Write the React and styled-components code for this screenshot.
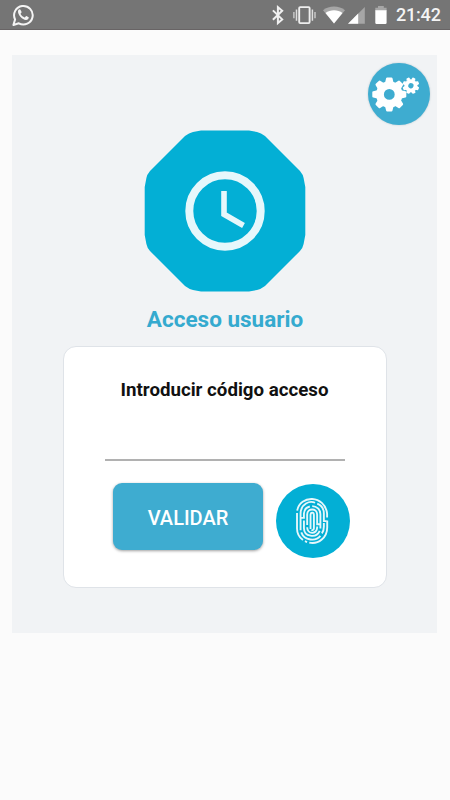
import styled, { createGlobalStyle } from "styled-components";

const GlobalStyle = createGlobalStyle`
  * {
    box-sizing: border-box;
  }

  body {
    margin: 0;
    background-color: #fbfbfb;
    font-family: Roboto, "Liberation Sans", sans-serif;
  }
`;

const Screen = styled.div`
  min-height: 800px;
`;

const StatusBar = styled.header`
  display: flex;
  align-items: center;
  justify-content: space-between;
  height: 30px;
  padding: 0 9px 0 11px;
  background-color: #757575;
  border-bottom: 1px solid #686465;
`;

const StatusIcons = styled.div`
  display: flex;
  align-items: center;
`;

const StatusIcon = styled.svg`
  display: block;
  width: ${(props) => props.$width}px;
  height: 30px;
  margin-right: ${(props) => props.$gap || 0}px;
`;

const Time = styled.span`
  width: 45px;
  padding-top: 1px;
  color: #f4f4f4;
  font-size: 18px;
  font-weight: 500;
  line-height: 30px;
  letter-spacing: -0.2px;
  white-space: nowrap;
`;

const Panel = styled.main`
  display: flex;
  flex-direction: column;
  align-items: center;
  width: 425px;
  height: 578px;
  margin: 25px 0 0 12px;
  padding: 8px 7px 0;
  background-color: #f1f3f5;
`;

const SettingsButton = styled.button`
  align-self: flex-end;
  width: 62px;
  height: 62px;
  padding: 0;
  border: none;
  border-radius: 50%;
  background-color: #3eacd0;
  box-shadow: 0 0 2px rgba(62, 110, 130, 0.35);
`;

const Logo = styled.svg`
  display: block;
  width: 162px;
  height: 162px;
  margin-top: 5px;
`;

const Title = styled.h1`
  margin: 12px 0 0;
  padding-left: 1px;
  color: #35aacf;
  font-size: 22.5px;
  font-weight: 700;
  line-height: 30px;
`;

const Card = styled.form`
  display: flex;
  flex-direction: column;
  align-items: center;
  width: 324px;
  height: 242px;
  margin-top: 12px;
  padding-top: 30px;
  border: 1px solid #dfe3e8;
  border-radius: 13px;
  background-color: #fff;
`;

const Label = styled.label`
  color: #111;
  font-size: 18.7px;
  font-weight: 700;
  line-height: 26px;
`;

const CodeInput = styled.input`
  width: 240px;
  height: 44px;
  margin-top: 14px;
  padding: 0 4px;
  border: none;
  border-bottom: 2px solid #b1b1b1;
  outline: none;
  background: transparent;
  font-size: 18px;
`;

const Actions = styled.div`
  display: flex;
  align-items: flex-start;
  gap: 13px;
  margin-top: 22px;
  margin-left: 13px;
`;

const SubmitButton = styled.button`
  width: 150px;
  height: 67px;
  padding: 2px 0 0 1px;
  border: none;
  border-radius: 9px;
  background-color: #3eacd0;
  box-shadow: 0 1px 3px rgba(0, 0, 0, 0.38);
  color: #fff;
  font-family: inherit;
  font-size: 20px;
  font-weight: 500;
`;

const FingerprintButton = styled.button`
  width: 74px;
  height: 74px;
  margin-top: 0.5px;
  padding: 0;
  border: none;
  border-radius: 50%;
  background-color: #03afd5;
`;

const Drawing = styled.svg`
  display: block;
  width: 100%;
  height: 100%;
`;

const TEETH = [0, 45, 90, 135, 180, 225, 270, 315];

function Gear({ x, y, scale = 1, turn = 0 }) {
  return (
    <g transform={`translate(${x} ${y}) rotate(${turn}) scale(${scale})`}>
      <circle r="9.3" fill="none" stroke="#fff" strokeWidth="7.8" />
      {TEETH.map((angle) => (
        <path
          key={angle}
          d="M-4.2 -12 L-3.2 -16.1 Q-3 -17 -2.1 -17 H2.1 Q3 -17 3.2 -16.1 L4.2 -12Z"
          fill="#fff"
          transform={`rotate(${angle})`}
        />
      ))}
    </g>
  );
}

function WhatsappIcon() {
  return (
    <StatusIcon $width={23} viewBox="0 0 23 30">
      <path
        d="M2.4 25 L4.1 19.4 A9.3 9.3 0 1 1 7.8 23.3 Z"
        fill="none"
        stroke="#f4f4f4"
        strokeWidth="2"
        strokeLinejoin="round"
      />
      <path
        d="M7 11.8 C7 10.5 8 9.7 8.7 9.7 C9.3 9.7 9.4 9.9 10.6 12.5 C10.8 13.1 9.4 14.1 9.6 14.5 C10.6 16.3 12 17.3 13.5 17.9 C14.2 18.1 14.8 16.2 15.4 16.4 L17.7 17.6 C18 18.5 16.9 20.3 15 20.3 C11.3 20 7 15.4 7 11.8Z"
        fill="#f4f4f4"
        transform="translate(0 -.4)"
      />
    </StatusIcon>
  );
}

function BluetoothIcon() {
  return (
    <StatusIcon $width={13} $gap={8} viewBox="0 0 13 30">
      <path
        d="M.9 10.4 L10.2 19.4 L5.9 23 V7.2 L10.2 10.8 L.9 19.8"
        fill="none"
        stroke="#f0f0f0"
        strokeWidth="2"
      />
    </StatusIcon>
  );
}

function VibrateIcon() {
  return (
    <StatusIcon $width={23} $gap={7} viewBox="0 0 23 30">
      <rect x="6.2" y="7.1" width="10.4" height="16" rx="1" fill="none" stroke="#eee" strokeWidth="1.9" />
      <path d="M3.5 9.5 V20.7 M19.4 9.5 V20.7" stroke="#ddd" strokeWidth="1.5" />
      <path d="M.9 12 V18.3 M22 12 V18.3" stroke="#ccc" strokeWidth="1.4" />
    </StatusIcon>
  );
}

function WifiIcon() {
  return (
    <StatusIcon $width={22} $gap={3} viewBox="0 0 22 30">
      <path d="M0 10.2 C6 5.2 16 5.2 22 10.2 L11 23.4Z" fill="#a6a6a6" />
      <path d="M2.5 13 C7 9.3 15 9.3 19.5 13 L11 23.4Z" fill="#fff" />
    </StatusIcon>
  );
}

function SignalIcon() {
  return (
    <StatusIcon $width={17} $gap={10} viewBox="0 0 17 30">
      <path d="M0 23.8 L16.8 7 V23.8Z" fill="#a6a6a6" />
      <path d="M0 23.8 L10.2 13.6 V23.8Z" fill="#fff" />
    </StatusIcon>
  );
}

function BatteryIcon() {
  return (
    <StatusIcon $width={12} $gap={9} viewBox="0 0 12 30">
      <path d="M3 6 H8.8 V7.7 H11.6 V11 H.3 V7.7 H3Z" fill="#a6a6a6" />
      <path d="M.3 10.3 H11.6 V22.8 Q11.6 24 10.4 24 H1.5 Q.3 24 .3 22.8Z" fill="#fff" />
    </StatusIcon>
  );
}

function ClockLogo() {
  return (
    <Logo viewBox="0 0 162 162">
      <path
        d="M57 .6 H105 L113 1.9 Q117 3 121 6 L156 41 Q159 44.5 159.6 48 L161.3 57 V105 L159.6 114 Q159 117.5 156 121 L121 156 Q117 159 113 160.1 L105 161.4 H57 L49 160.1 Q45 159 41 156 L6 121 Q3 117.5 2.4 114 L.7 105 V57 L2.4 48 Q3 44.5 6 41 L41 6 Q45 3 49 1.9Z"
        fill="#03afd5"
      />
      <circle cx="81" cy="81" r="35.7" fill="none" stroke="#e6f7fb" strokeWidth="8" />
      <path d="M80 61 V84.3 L99.5 95.5" fill="none" stroke="#e6f7fb" strokeWidth="5.6" />
    </Logo>
  );
}

function GearsIcon() {
  return (
    <Drawing viewBox="0 0 62 62">
      <Gear x={21.3} y={31.4} />
      <Gear x={42.9} y={22.7} scale={0.49} turn={22.5} />
    </Drawing>
  );
}

function FingerprintIcon() {
  return (
    <Drawing viewBox="0 0 75 75">
      <g fill="none" stroke="#e6f7fb" strokeWidth="1.9" transform="translate(-.7 0)">
        <path d="M22.2 27 C24.8 10.8 50.2 10.8 52.5 30 V34" />
        <path d="M22 29.5 V45 C22 50 24 53.8 28 56.7" />
        <path d="M30 58 L32.2 58.8 M34.4 59.5 C44 61.5 52.6 54 52.6 44 V37" />
        <path d="M25.6 46.8 V30 C26 19.5 35 16.7 40.3 19" />
        <path d="M42.5 20 C46.5 21.6 49.2 25.5 49.2 30 V37.6 H52" />
        <path d="M26.3 49 C29.5 57.5 41 58.6 45.7 52.6 M47.2 50 Q49.2 47.5 49.2 43 V39.5" />
        <path d="M25.6 34.3 H29 V30 C29.3 26 32 23.5 35 22.8 M37.4 22.4 C42 22.4 45.7 26 45.7 30.5 V45" />
        <path d="M29 37 V44.5 C29 53.5 41.5 55.5 45 47.5" />
        <path d="M32.3 41.5 V31 C32.3 24.2 42.4 24.2 42.4 31 V40.8 H45.3" />
        <path d="M32.3 43.8 C32.3 51.4 42.4 51.4 42.4 44 V43" />
        <path d="M35.7 45.5 V31.5 Q35.7 29 37.4 29 Q39.1 29 39.1 31.5 V45 Q38.8 47 36.5 47" />
      </g>
    </Drawing>
  );
}

function App() {
  return (
    <Screen>
      <GlobalStyle />
      <StatusBar>
        <WhatsappIcon />
        <StatusIcons>
          <BluetoothIcon />
          <VibrateIcon />
          <WifiIcon />
          <SignalIcon />
          <BatteryIcon />
          <Time>21:42</Time>
        </StatusIcons>
      </StatusBar>
      <Panel>
        <SettingsButton type="button">
          <GearsIcon />
        </SettingsButton>
        <ClockLogo />
        <Title>Acceso usuario</Title>
        <Card>
          <Label htmlFor="code">Introducir código acceso</Label>
          <CodeInput id="code" type="password" />
          <Actions>
            <SubmitButton type="button">VALIDAR</SubmitButton>
            <FingerprintButton type="button">
              <FingerprintIcon />
            </FingerprintButton>
          </Actions>
        </Card>
      </Panel>
    </Screen>
  );
}

export default App;
